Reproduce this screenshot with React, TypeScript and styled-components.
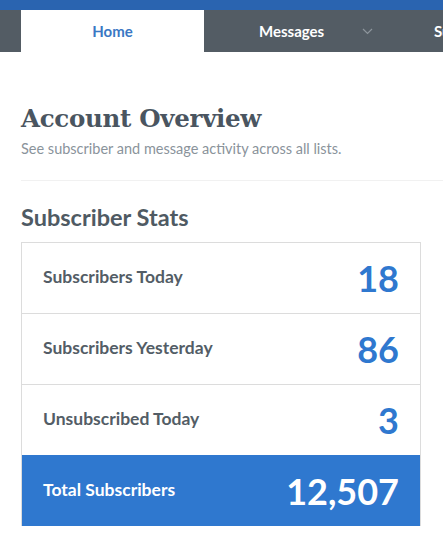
import React from "react";
import styled, { createGlobalStyle } from "styled-components";

const GlobalStyle = createGlobalStyle`
  html, body {
    margin: 0;
    padding: 0;
    background: #ffffff;
    font-family: Lato, "Liberation Sans", sans-serif;
  }
  * {
    box-sizing: border-box;
  }
`;

const Page = styled.div`
  width: 443px;
  overflow: hidden;
`;

const TopStripe = styled.div`
  height: 10px;
  background: #2a64b0;
`;

const NavBar = styled.nav`
  display: flex;
  align-items: stretch;
  height: 42px;
  padding-left: 21px;
  background: #535c64;
  white-space: nowrap;
  overflow: hidden;
`;

const Tab = styled.div<{ $active?: boolean; $width?: number }>`
  display: flex;
  align-items: center;
  justify-content: center;
  flex: 0 0 auto;
  width: ${(p) => (p.$width ? `${p.$width}px` : "auto")};
  background: ${(p) => (p.$active ? "#ffffff" : "transparent")};
  color: ${(p) => (p.$active ? "#3a78c4" : "#ffffff")};
  font-size: 15px;
  font-weight: 700;
`;

const DropTab = styled(Tab)`
  justify-content: flex-start;
  padding-left: 55px;
  gap: 38px;
`;

const NextTab = styled(Tab)`
  padding-left: 30px;
`;

const Chevron = styled.svg`
  width: 11px;
  height: 7px;
`;

const Main = styled.main`
  padding: 52px 0 0 21px;
`;

const Title = styled.h1`
  margin: 0;
  font-family: "DejaVu Serif", "Liberation Serif", serif;
  font-size: 24.5px;
  font-weight: 700;
  color: #4a5560;
  letter-spacing: -0.3px;
  line-height: 30px;
`;

const Subtitle = styled.p`
  margin: 6px 0 0;
  font-size: 14.5px;
  color: #8a939b;
  line-height: 18px;
`;

const Divider = styled.hr`
  margin: 22px 0 0;
  border: none;
  border-top: 1px solid #f1f1f1;
`;

const SectionTitle = styled.h2`
  margin: 22px 0 0;
  font-size: 23.5px;
  font-weight: 700;
  color: #4f5a63;
  line-height: 28px;
`;

const StatsTable = styled.div`
  margin-top: 11px;
  width: 400px;
  border: 1px solid #dcdcdc;
  border-bottom: none;
`;

const StatRow = styled.div<{ $total?: boolean }>`
  display: flex;
  align-items: center;
  justify-content: space-between;
  height: 71px;
  padding: 0 21px;
  background: ${(p) => (p.$total ? "#2f78cf" : "#ffffff")};
  border-top: ${(p) => (p.$total ? "none" : "1px solid #dcdcdc")};
  &:first-child {
    border-top: none;
    height: 70px;
  }
`;

const StatLabel = styled.span<{ $total?: boolean }>`
  font-size: 17.5px;
  font-weight: 700;
  color: ${(p) => (p.$total ? "#ffffff" : "#535d66")};
  margin-top: -3px;
`;

const StatValue = styled.span<{ $total?: boolean }>`
  font-size: 36px;
  font-weight: 700;
  color: ${(p) => (p.$total ? "#ffffff" : "#2f78cf")};
  line-height: 1;
`;

const stats = [
  { label: "Subscribers Today", value: "18" },
  { label: "Subscribers Yesterday", value: "86" },
  { label: "Unsubscribed Today", value: "3" },
  { label: "Total Subscribers", value: "12,507", total: true },
];

export default function App() {
  return (
    <Page>
      <GlobalStyle />
      <TopStripe />
      <NavBar>
        <Tab $active $width={183}>
          Home
        </Tab>
        <DropTab $width={200}>
          Messages
          <Chevron viewBox="0 0 11 7" fill="none" stroke="#8d959c" strokeWidth="1.2">
            <path d="M1 1l4.5 4.5L10 1" />
          </Chevron>
        </DropTab>
        <NextTab>Subscribers</NextTab>
      </NavBar>
      <Main>
        <Title>Account Overview</Title>
        <Subtitle>See subscriber and message activity across all lists.</Subtitle>
        <Divider />
        <SectionTitle>Subscriber Stats</SectionTitle>
        <StatsTable>
          {stats.map((s) => (
            <StatRow key={s.label} $total={s.total}>
              <StatLabel $total={s.total}>{s.label}</StatLabel>
              <StatValue $total={s.total}>{s.value}</StatValue>
            </StatRow>
          ))}
        </StatsTable>
      </Main>
    </Page>
  );
}
